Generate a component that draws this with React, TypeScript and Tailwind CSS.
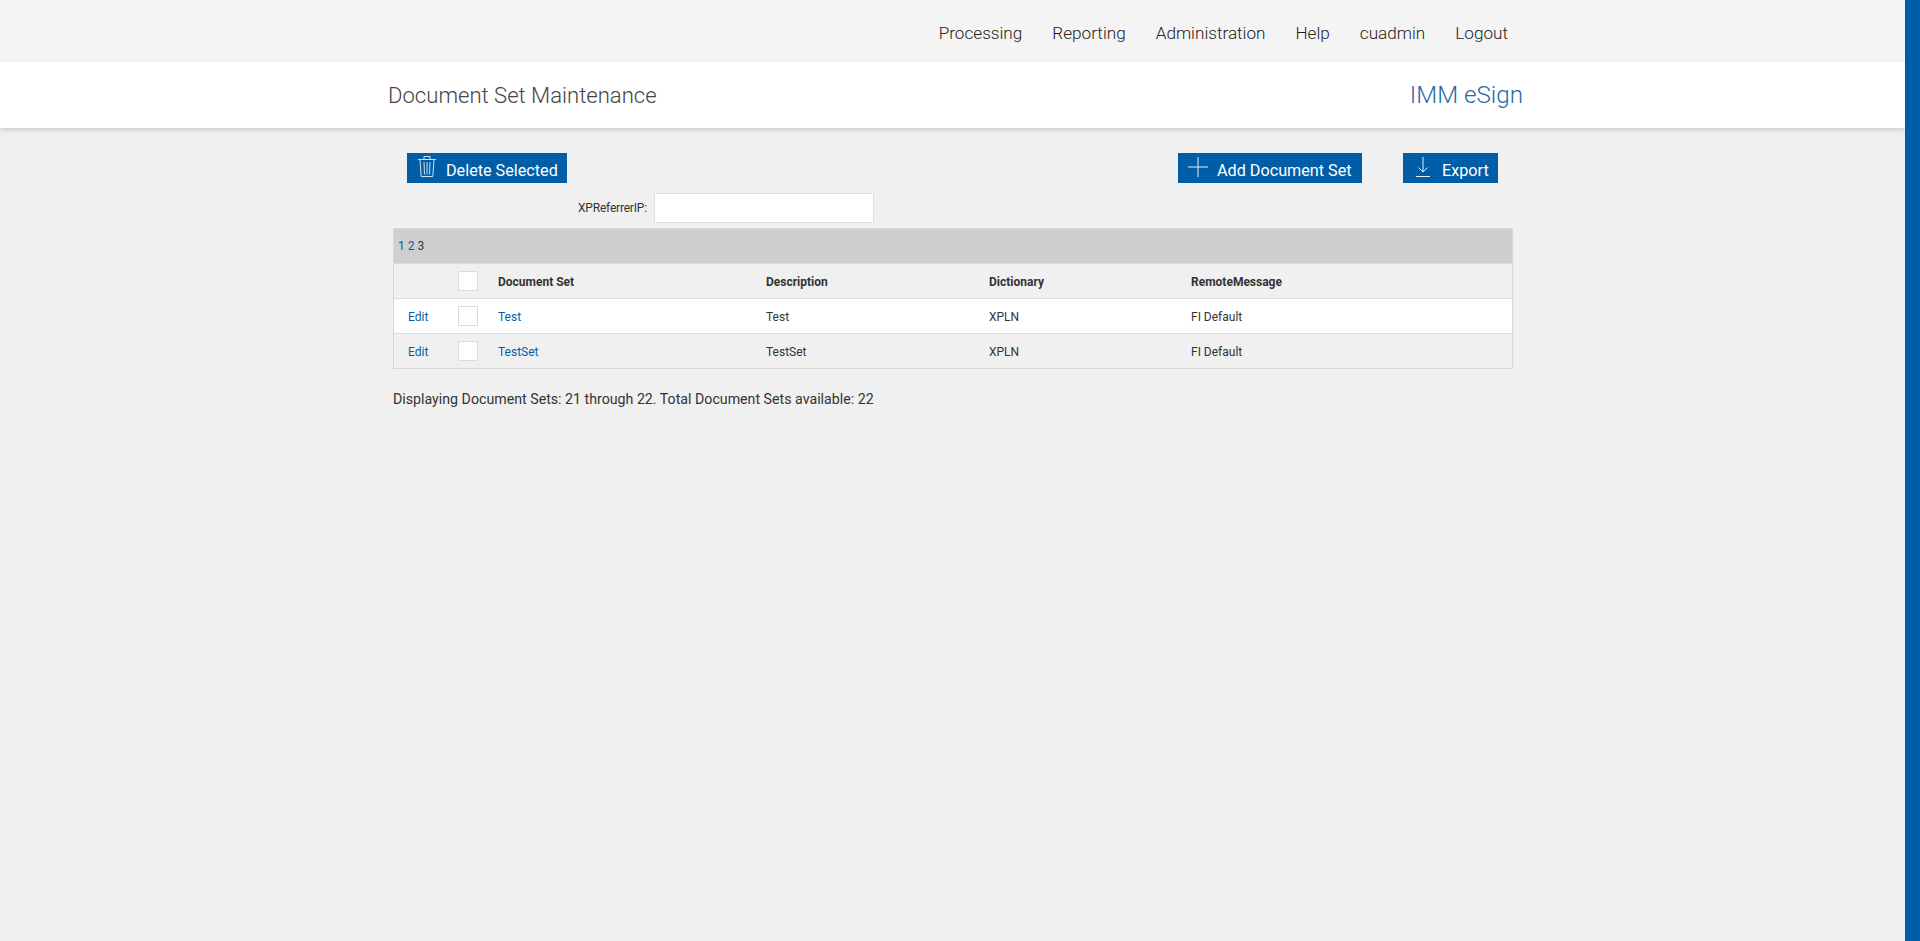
const navItems = ["Processing", "Reporting", "Administration", "Help", "cuadmin", "Logout"];

const rows = [
  { name: "Test", description: "Test", dictionary: "XPLN", message: "FI Default", bg: "bg-white" },
  { name: "TestSet", description: "TestSet", dictionary: "XPLN", message: "FI Default", bg: "bg-[#f0f0f0]" },
];

const Checkbox = () => (
  <div className="h-[20px] w-[20px] border border-[#dcdcdc] bg-white" />
);

const TrashIcon = () => (
  <svg width="18" height="21" viewBox="0 0 18 21" fill="none" stroke="#cfe0ee" strokeWidth="1">
    <path d="M0 3.5h18M6 3.5V.5h6v3M2 3.5l1.2 17h11.6l1.2-17M6 6l.5 12.5M9 6v12.5M12 6l-.5 12.5" />
  </svg>
);

const PlusIcon = () => (
  <svg width="20" height="20" viewBox="0 0 20 20" fill="none" stroke="#e6eff6" strokeWidth="1">
    <path d="M10 0v20M0 10h20" />
  </svg>
);

const ExportIcon = () => (
  <svg width="14" height="20" viewBox="0 0 14 20" fill="none" stroke="#e6eff6" strokeWidth="1">
    <path d="M7 0v15M2.5 10.500L7 15l4.500-4.500M0 19.500h14" />
  </svg>
);

const App = () => {
  return (
    <div className="flex h-[941px] overflow-hidden bg-[#f0f0f0] font-['Roboto',sans-serif] text-[#333]">
      <div className="flex-1">
        {/* top nav */}
        <div className="h-[62px] bg-[#f4f4f4]">
          <nav className="flex h-full items-center justify-end gap-[30px] pt-[5px] pr-[397px] text-[17.15px] font-light text-[#222]">
            {navItems.map((item) => (
              <a key={item}>{item}</a>
            ))}
          </nav>
        </div>

        {/* title band */}
        <header className="h-[66px] bg-white shadow-[0_2px_5px_rgba(0,0,0,0.15)]">
          <div className="flex h-full items-center justify-between pr-[382px] pl-[388px]">
            <h1 className="pt-[2px] text-[22.1px] font-light text-[#444]">Document Set Maintenance</h1>
            <span className="text-[24.2px] font-light text-[#2a6aa5]">IMM eSign</span>
          </div>
        </header>

        <main className="ml-[393px] w-[1120px]">
          {/* buttons */}
          <div className="mt-[25px] flex h-[30px] items-stretch pl-[14px] text-[16.2px] text-white">
            <button className="flex w-[160px] items-center bg-[#005ea8] pl-[11px]">
              <span className="-mt-[3px]"><TrashIcon /></span>
              <span className="mt-[6px] ml-[10px]">Delete Selected</span>
            </button>
            <button className="ml-[611px] flex w-[184px] items-center bg-[#005ea8] pl-[10px]">
              <span className="-mt-[3px]"><PlusIcon /></span>
              <span className="mt-[6px] ml-[9px]">Add Document Set</span>
            </button>
            <button className="ml-[41px] flex w-[95px] items-center bg-[#005ea8] pl-[13px]">
              <span className="-mt-[3px]"><ExportIcon /></span>
              <span className="mt-[6px] ml-[12px]">Export</span>
            </button>
          </div>

          {/* filter */}
          <div className="mt-[10px] flex h-[30px] items-center pl-[185px] text-[12px] text-[#333]">
            <label className="w-[76px] tracking-[-0.2px]">XPReferrerIP:</label>
            <div className="h-[30px] w-[220px] border border-[#e2e2e2] bg-white" />
          </div>

          {/* table */}
          <div className="mt-[5px] border border-[#d8d8d8]">
            <div className="flex h-[35px] items-center border-b border-[#dcdcdc] bg-[#cfcfcf] pl-[4px] text-[12px]">
              <a className="text-[#005ea8]">1</a>
              <a className="ml-[3px] text-[#005ea8]">2</a>
              <span className="ml-[3px]">3</span>
            </div>
            <table className="w-full table-fixed border-collapse text-[12px]">
              <thead>
                <tr className="h-[34px] font-bold text-[#333]">
                  <th className="w-[64px]" />
                  <th className="w-[40px] text-left"><Checkbox /></th>
                  <th className="w-[268px] text-left"><span className="relative top-px">Document Set</span></th>
                  <th className="w-[223px] text-left"><span className="relative top-px">Description</span></th>
                  <th className="w-[202px] text-left"><span className="relative top-px">Dictionary</span></th>
                  <th className="text-left"><span className="relative top-px">RemoteMessage</span></th>
                </tr>
              </thead>
              <tbody>
                {rows.map((row) => (
                  <tr key={row.name} className={`h-[35px] border-t border-[#dcdcdc] ${row.bg}`}>
                    <td className="pt-[2px] pl-[14px] text-[#005ea8]">Edit</td>
                    <td><Checkbox /></td>
                    <td className="pt-[2px] text-[#005ea8]">{row.name}</td>
                    <td className="pt-[2px]">{row.description}</td>
                    <td className="pt-[2px]">{row.dictionary}</td>
                    <td className="pt-[2px]">{row.message}</td>
                  </tr>
                ))}
              </tbody>
            </table>
          </div>

          <p className="mt-[20px] text-[14.2px] text-[#333]">
            Displaying Document Sets: 21 through 22. Total Document Sets available: 22
          </p>
        </main>
      </div>

      {/* scrollbar */}
      <div className="w-[15px] bg-[#005ea8]" />
    </div>
  );
};

export default App;
